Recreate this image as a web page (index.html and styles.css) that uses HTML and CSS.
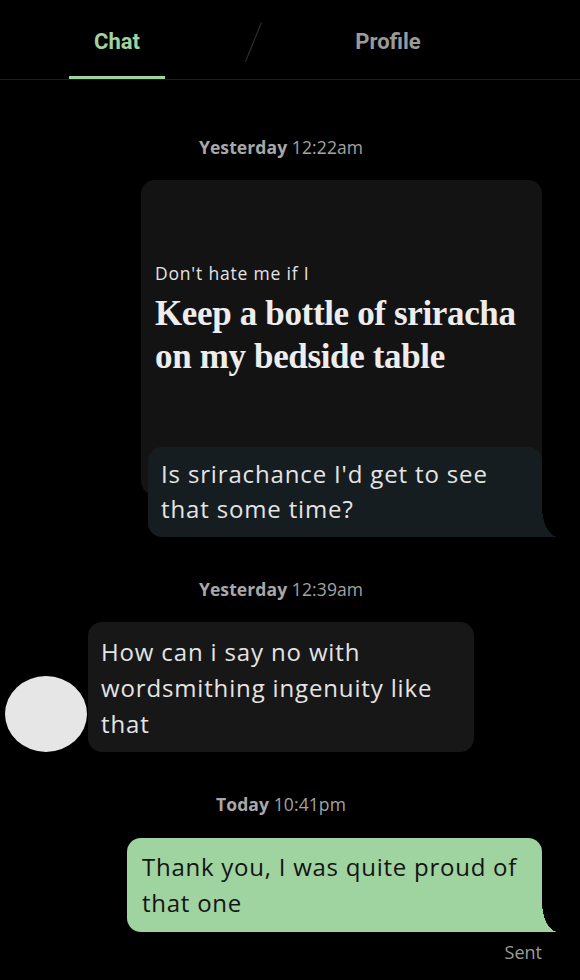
FILE: index.html
```html
<!DOCTYPE html>
<html lang="en">
<head>
<meta charset="utf-8">
<title>Chat</title>
<link rel="stylesheet" href="styles.css">
</head>
<body>
<div class="app">
  <header class="tabs">
    <div class="tab tab-active">Chat</div>
    <svg class="slash" width="17" height="40" viewBox="0 0 17 40"><line x1="16.5" y1="0.5" x2="0.5" y2="39.5" stroke="#2e2e2e" stroke-width="1.2"/></svg>
    <div class="tab tab-profile">Profile</div>
  </header>

  <main class="thread">
    <div class="stamp"><b>Yesterday</b> 12:22am</div>

    <div class="prompt-card">
      <div class="prompt-label">Don't hate me if I</div>
      <div class="prompt-answer">Keep a bottle of sriracha on my bedside table</div>
    </div>
    <div class="bubble bubble-reply tail">Is srirachance I'd get to see that some time?</div>

    <div class="stamp stamp-2"><b>Yesterday</b> 12:39am</div>

    <div class="received-row">
      <div class="avatar"></div>
      <div class="bubble bubble-in">How can i say no with wordsmithing ingenuity like that</div>
    </div>

    <div class="stamp stamp-3"><b>Today</b> 10:41pm</div>

    <div class="bubble bubble-out tail">Thank you, I was quite proud of that one</div>
    <div class="sent">Sent</div>
  </main>
</div>
</body>
</html>
```

FILE: styles.css
```css
* { box-sizing: border-box; }
html, body { margin: 0; padding: 0; background: #000; }
body { font-family: "Open Sans", Roboto, sans-serif; color: #e6e6e6; }
.app { width: 580px; min-height: 980px; background: #000; overflow: hidden; }

.tabs {
  display: flex;
  height: 80px;
  border-bottom: 1px solid #1f1f1f;
}
.tab {
  height: 79px;
  padding-top: 29px;
  font-family: Roboto, sans-serif;
  font-size: 22px;
  line-height: 26px;
  font-weight: 700;
  text-align: center;
}
.tab-active {
  margin-left: 69px;
  width: 96px;
  color: #9fd3a0;
  border-bottom: 3px solid #9fd3a0;
}
.slash { margin-left: 80px; margin-top: 22px; flex: none; }
.tab-profile { margin-left: 76px; width: 100px; color: #9a9a9a; }

.thread { display: flex; flex-direction: column; }

.stamp {
  margin-top: 57px;
  padding-right: 18px;
  text-align: center;
  font-size: 17.5px;
  line-height: 21px;
  color: #a3a3a3;
  letter-spacing: 0.1px;
}
.stamp b { font-weight: 700; color: #a8a8a8; }
.stamp-2 { margin-top: 42px; }
.stamp-3 { margin-top: 42px; }

.prompt-card {
  margin-top: 22px;
  margin-left: 141px;
  width: 401px;
  height: 315px;
  background: #131313;
  border-radius: 14px;
  padding: 82px 14px 0 14px;
}
.prompt-label { font-size: 17.5px; line-height: 22px; color: #e4e4e4; letter-spacing: 0.8px; }
.prompt-answer {
  margin-top: 8px;
  font-family: "Liberation Serif", "DejaVu Serif", serif;
  font-weight: 700;
  font-size: 35px;
  line-height: 43px;
  color: #ededed;
  letter-spacing: -0.35px;
}

.bubble {
  font-size: 24px;
  line-height: 36px;
  letter-spacing: 0.85px;
  border-radius: 14px;
  position: relative;
}
.tail { border-bottom-right-radius: 0; }
.tail::after {
  content: "";
  position: absolute;
  right: -16px;
  bottom: 0;
  width: 16px;
  height: 30px;
  background: radial-gradient(ellipse 16px 30px at 100% 0, transparent 99%, var(--bg) 100%);
}

.bubble-reply {
  --bg: #161d21;
  background: var(--bg);
  margin-top: -48px;
  margin-left: 148px;
  width: 394px;
  height: 90px;
  padding: 9px 20px 10px 13px;
  line-height: 35px;
  color: #e4e4e4;
}

.received-row {
  margin-top: 22px;
  display: flex;
  align-items: flex-end;
  padding-left: 5px;
}
.avatar {
  width: 82px;
  height: 76px;
  border-radius: 50%;
  background: #e6e6e6;
  flex: none;
}
.bubble-in {
  margin-left: 1px;
  width: 386px;
  height: 130px;
  background: #171717;
  padding: 12px 20px 8px 13px;
  color: #e4e4e4;
}

.bubble-out {
  --bg: #9fd3a0;
  background: var(--bg);
  margin-top: 23px;
  margin-left: 127px;
  width: 415px;
  height: 94px;
  padding: 11px 10px 10px 15px;
  color: #141414;
  letter-spacing: 0.75px;
}

.sent {
  margin-top: 10px;
  width: 542px;
  text-align: right;
  font-size: 18px;
  line-height: 20px;
  color: #9a9a9a;
}
```
